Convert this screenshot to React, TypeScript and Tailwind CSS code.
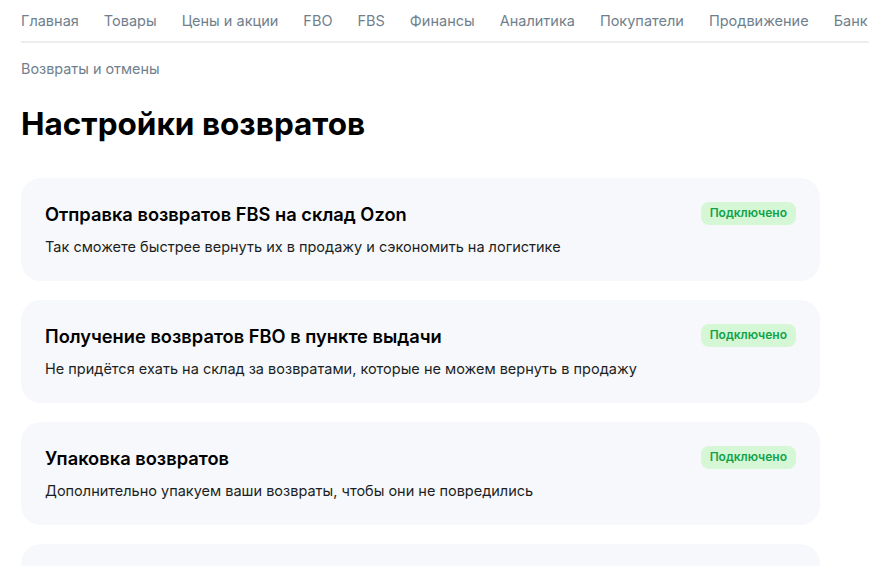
import React from "react";

const nav = ["Главная", "Товары", "Цены и акции", "FBO", "FBS", "Финансы", "Аналитика", "Покупатели", "Продвижение", "Банк"];

const cards = [
  { t: "Отправка возвратов FBS на склад Ozon", d: "Так сможете быстрее вернуть их в продажу и сэкономить на логистике" },
  { t: "Получение возвратов FBO в пункте выдачи", d: "Не придётся ехать на склад за возвратами, которые не можем вернуть в продажу" },
  { t: "Упаковка возвратов", d: "Дополнительно упакуем ваши возвраты, чтобы они не повредились" },
];

export default function App() {
  return (
    <div className="w-[869px] h-[566px] overflow-hidden bg-white pl-[21px] text-[#001a34]" style={{ fontFamily: "Inter, 'Noto Sans', sans-serif" }}>
      <div className="flex gap-[25px] h-[43px] items-center border-b-2 border-[#eceef0] whitespace-nowrap text-[14.5px] text-[#707f8d]">
        {nav.map((n) => (
          <span key={n}>{n}</span>
        ))}
      </div>
      <div className="mt-[15px] text-[14.4px] text-[#707f8d]">Возвраты и отмены</div>
      <h1 className="mt-[24px] text-[31.5px] font-bold leading-[40px] text-black">Настройки возвратов</h1>
      <div className="mt-[34px] flex flex-col gap-[19px] w-[799px]">
        {[...cards, null].map((c, i) => (
          <div key={i} className="rounded-[20px] bg-[#f7f8fb] h-[103px] pl-[24px] pr-[24px] pt-[23px]">
            {c && (
              <>
                <div className="flex items-start justify-between">
                  <div className="text-[18.3px] font-semibold leading-[26px] text-black">{c.t}</div>
                  <span className="rounded-[8px] bg-[#d6f7d6] px-[9px] h-[23px] flex items-center text-[12px] font-semibold text-[#10a34a] mt-[1px]">Подключено</span>
                </div>
                <div className="mt-[10px] text-[14.5px] leading-[20px] text-[#1b1f23]">{c.d}</div>
              </>
            )}
          </div>
        ))}
      </div>
    </div>
  );
}
